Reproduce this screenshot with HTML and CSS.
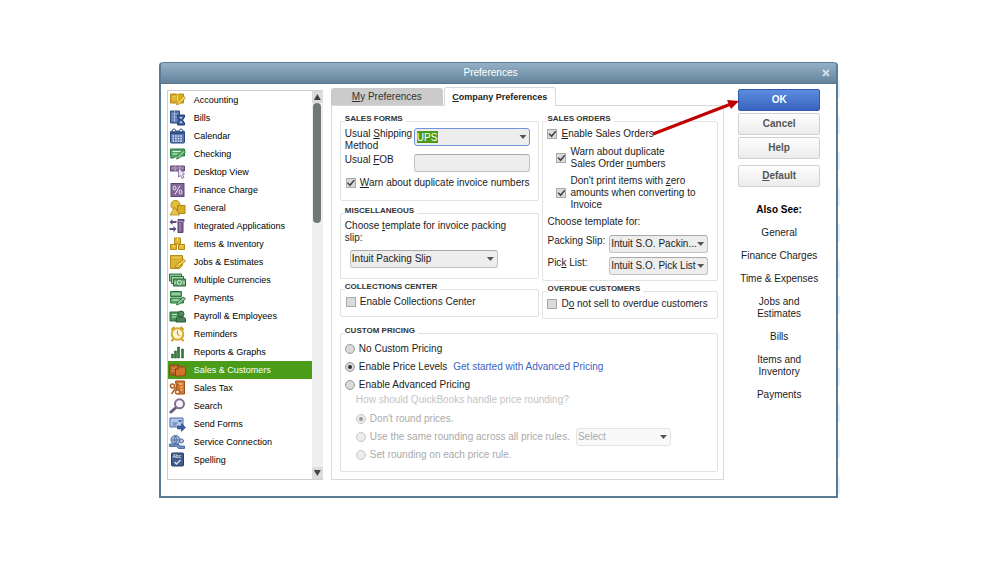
FILE: index.html
```
<!DOCTYPE html>
<html lang="en">
<head>
    <meta charset="UTF-8">
    <meta name="viewport" content="width=device-width, initial-scale=1.0">
    <title>Preferences</title>
    <link rel="stylesheet" href="styles.css">
</head>
<body>
    <div class="desktop">
    <main class="dialog">
        <header class="titlebar">
            <h1>Preferences</h1>
            <button class="close" aria-label="Close"><svg viewBox="0 0 8 8"><path d="M1 1L7 7M7 1L1 7" stroke="#d5dfe6" stroke-width="2"/></svg></button>
        </header>

        <div class="content">
            <nav class="sidebar">
                <ul class="sections">
                    <li><a href="#"><svg viewBox="0 0 16 16"><path d="M1 2h6l1 1 1-1h5v9H9l-1 1-1-1H1z" fill="#d9ad22" stroke="#b18a18"/><path d="M8 3v8M3 4.500h3M3 7h3" stroke="#f3d873"/><path d="M7 13l1-3 6-6 2 2-6 6z" fill="#f2cf55" stroke="#a98112" stroke-width=".7"/></svg>Accounting</a></li>
                    <li><a href="#"><svg viewBox="0 0 16 16"><path d="M1 1h9v12H1z" fill="#5274ae" stroke="#304f86"/><path d="M2 4h7M2 7h7M2 10h5M5 1v11" stroke="#b9cae8" stroke-width=".7"/><path d="M8 5h7v2l-2 3 2 3v2H8v-2l2-3-2-3z" fill="#3d5f9c" stroke="#243f70"/><path d="M10 7h3l-1.500 2zM10 13h3l-1.500-2z" fill="#dce7fa"/></svg>Bills</a></li>
                    <li><a href="#"><svg viewBox="0 0 16 16"><rect x="1" y="3" width="14" height="12" rx="1" fill="#5576ae" stroke="#304d80"/><path d="M1.500 3.500h13V6h-13z" fill="#344f83"/><path d="M3 8h10M3 10.500h10M3 13h10" stroke="#e1eafa" stroke-width="1.400" stroke-dasharray="1.600 1"/><circle cx="4.500" cy="2.500" r="1.500" fill="#fff" stroke="#304d80"/><circle cx="11.500" cy="2.500" r="1.500" fill="#fff" stroke="#304d80"/></svg>Calendar</a></li>
                    <li><a href="#"><svg viewBox="0 0 16 16"><path d="M1 3h14v7H7l-3 2H1l1-2H1z" fill="#56a566" stroke="#28793d"/><path d="M3 5.500h8M3 8h5" stroke="#d8f0da"/><path d="M7 13l1-3 6-6 2 2-6 6z" fill="#82c68d" stroke="#236936" stroke-width=".8"/></svg>Checking</a></li>
                    <li><a href="#"><svg viewBox="0 0 16 16"><path d="M1 2h14v5H1z" fill="#856d99" stroke="#624a78"/><path d="M5.500 2v5M10.500 2v5M2 4h2M7 4h2M12 4h2" stroke="#c9b9d6"/><path d="M9 4l6 6-2 .5 1.500 3-2 1-1.500-3L9 13z" fill="#eee6f5" stroke="#796090" stroke-width=".8"/></svg>Desktop View</a></li>
                    <li><a href="#"><svg viewBox="0 0 16 16"><rect x="1.500" y="1.500" width="13" height="13" fill="#806695" stroke="#60477a"/><ellipse cx="5" cy="6" rx="1.500" ry="2" fill="none" stroke="#efe6f5"/><ellipse cx="11" cy="10" rx="1.500" ry="2" fill="none" stroke="#efe6f5"/><path d="M10.500 3.500l-5 9" stroke="#efe6f5"/></svg>Finance Charge</a></li>
                    <li><a href="#"><svg viewBox="0 0 16 16"><circle cx="6" cy="5" r="4.500" fill="#e4bf3e" stroke="#b18a1b"/><path d="M8 5.500h7.500v8H8z" fill="#d8ac28" stroke="#ae8417"/><path d="M5 7l5 8H.500z" fill="#e8c547" stroke="#b18a1b" stroke-width=".8"/></svg>General</a></li>
                    <li><a href="#"><svg viewBox="0 0 16 16"><path d="M8.500 1.500h6v2h-1v11h-5z" fill="#7a6191" stroke="#5a4270"/><path d="M9 3.500h5M10.500 5v8" stroke="#a893ba" fill="none"/><path d="M0 4l3-3v2h4v2H3v2zM7 11l-3-3v2H0v2h4v2z" fill="#624879"/></svg>Integrated Applications</a></li>
                    <li><a href="#"><svg viewBox="0 0 16 16"><path d="M5 2h6v6H5zM1 8.500h6v5H1zM9 8.500h6v5H9z" fill="#e2b92f" stroke="#b18a19"/><path d="M8 2v3M4 9v2M12 9v2" stroke="#fae493"/></svg>Items &amp; Inventory</a></li>
                    <li><a href="#"><svg viewBox="0 0 16 16"><path d="M1 1.500h12v10l-3 3H1z" fill="#dcb332" stroke="#b48d1b"/><path d="M3 3.500h8" stroke="#edcf67"/><path d="M5 14l2-3 7-6 2 2-7 6z" fill="#f0cd52" stroke="#a67c13" stroke-width=".8"/></svg>Jobs &amp; Estimates</a></li>
                    <li><a href="#"><svg viewBox="0 0 17 16"><path d="M.500 2h12v7H.500z" fill="#86bd8a" stroke="#2c7740"/><path d="M2.500 4.500h12v7h-12z" fill="#a9d3a8" stroke="#2c7740"/><path d="M4.500 7h12v7h-12z" fill="#63a870" stroke="#226735"/><circle cx="10.500" cy="10.500" r="2" fill="none" stroke="#dceedd"/><path d="M6 9v3M15 9v3" stroke="#dceedd"/></svg>Multiple Currencies</a></li>
                    <li><a href="#"><svg viewBox="0 0 16 16"><path d="M1 1.500h11v5H1zM1 8h13v5H1z" fill="#60aa70" stroke="#277a3e"/><path d="M2 4h9M3 10h7" stroke="#d5edd6"/><path d="M7 15l1-3 6-5 2 2-6 5z" fill="#8bc690" stroke="#226735" stroke-width=".8"/></svg>Payments</a></li>
                    <li><a href="#"><svg viewBox="0 0 17 16"><path d="M1 4h12v9H1z" fill="#4c965b" stroke="#286d39"/><path d="M3 6.500h5M3 9h4" stroke="#c5e2c7"/><circle cx="12" cy="6" r="3" fill="#548c5b" stroke="#28643a"/><path d="M7 14v-2q0-3 5-3t4.500 3v2z" fill="#4c8256" stroke="#235d34"/></svg>Payroll &amp; Employees</a></li>
                    <li><a href="#"><svg viewBox="0 0 16 16"><path d="M2 4l3-3M14 4l-3-3M4 13l-2 2M12 13l2 2" stroke="#c59925" stroke-width="2"/><circle cx="8" cy="8" r="5.800" fill="#fff5d3" stroke="#d5aa2e" stroke-width="2"/><path d="M8 4.500V8l2 2" stroke="#a98322" fill="none"/></svg>Reminders</a></li>
                    <li><a href="#"><svg viewBox="0 0 16 16"><path d="M2 10h2v4H2zM5 7h2v7H5zM8 3h2v11H8zM12 5h2v9h-2z" fill="#397d42" stroke="#276332" stroke-width=".6"/></svg>Reports &amp; Graphs</a></li>
                    <li class="selected"><a href="#" aria-current="page"><svg viewBox="0 0 16 16"><path d="M0 3h9v10H0z" fill="#b76124" stroke="#8d4617"/><path d="M2 5l2 2 3-3M2 9h3" stroke="#ebaa70" fill="none"/><path d="M6 7h3V5l2-1 1 2 3-2 1 1v8l-3 1H6z" fill="#d2752a" stroke="#904716"/></svg>Sales &amp; Customers</a></li>
                    <li><a href="#"><svg viewBox="0 0 16 16"><path d="M6 1h9v13H8z" fill="#cf7832" stroke="#9a4f1b"/><path d="M9 4h4M11 7h2M11 10h2" stroke="#ffe1c4"/><g fill="#fff" stroke="#b3601f" stroke-width="1.500"><circle cx="3" cy="6" r="2"/><circle cx="8" cy="12" r="2"/><path d="M9 4l-7 10"/></g></svg>Sales Tax</a></li>
                    <li><a href="#"><svg viewBox="0 0 16 16"><path d="M6.500 9.500L1.500 14" stroke="#6b597c" stroke-width="3" stroke-linecap="round"/><circle cx="10" cy="5.800" r="4.500" fill="#f6f3fa" stroke="#806d90" stroke-width="2"/></svg>Search</a></li>
                    <li><a href="#"><svg viewBox="0 0 16 16"><path d="M.500 2h13v9H.500z" fill="#b7c9eb" stroke="#486ba8"/><path d="M3 7h5M3 9h4" stroke="#486ba8"/><path d="M9 4h3v2H9z" fill="#486ba8"/><path d="M8 10h4V7.500l4 4-4 4V13H8z" fill="#3b5f9f" stroke="#25457c" stroke-width=".6"/></svg>Send Forms</a></li>
                    <li><a href="#"><svg viewBox="0 0 16 16"><circle cx="6" cy="6" r="4.500" fill="#a4b9dc" stroke="#48689c"/><path d="M2 6h8M6 2q-3 4 0 8M6 2q3 4 0 8" fill="none" stroke="#48689c" stroke-width=".8"/><path d="M0 10h9l2 2h4v2.500h-6l-2-2H0z" fill="#718fbe" stroke="#38588d" stroke-width=".8"/><circle cx="12" cy="7" r="2" fill="#b9c9e4" stroke="#48689c"/></svg>Service Connection</a></li>
                    <li><a href="#"><svg viewBox="0 0 16 16"><rect x="2" y="1" width="12" height="13" rx="1" fill="#415c8b" stroke="#263e68"/><text x="3" y="6" class="abc">Abc</text><path d="M5 10l2 2 4-4" fill="none" stroke="#dbe5f6" stroke-width="1.300"/></svg>Spelling</a></li>
                </ul>
                <div class="scrollbar">
                    <button class="scroll-up" aria-label="Scroll up"></button>
                    <div class="thumb"></div>
                    <button class="scroll-down" aria-label="Scroll down"></button>
                </div>
            </nav>

            <section class="settings">
                <div class="tabs" role="tablist">
                    <button class="tab" role="tab"><span><u>M</u>y Preferences</span></button>
                    <button class="tab active" role="tab" aria-selected="true"><span><u>C</u>ompany Preferences</span></button>
                </div>
                <form class="panel">
                    <div class="columns">
                        <div class="column">
                            <fieldset class="sales-forms">
                                <legend>SALES FORMS</legend>
                                <div class="form-grid">
                                    <label for="shipping">Usual <u>S</u>hipping<br>Method</label>
                                    <span class="combo"><input class="field shipping" type="text" id="shipping" value="UPS"></span>
                                    <label for="fob">Usual <u>F</u>OB</label>
                                    <input class="field" type="text" id="fob">
                                </div>
                                <label class="check"><input type="checkbox" checked><span><u>W</u>arn about duplicate invoice numbers</span></label>
                            </fieldset>
                            <fieldset class="misc">
                                <legend>MISCELLANEOUS</legend>
                                <label for="packing">Choose <u>t</u>emplate for invoice packing<br>slip:</label>
                                <span class="combo"><select class="field" id="packing"><option>Intuit Packing Slip</option></select></span>
                            </fieldset>
                            <fieldset class="collections">
                                <legend>COLLECTIONS CENTER</legend>
                                <label class="check"><input type="checkbox"><span>Enable Collections Center</span></label>
                            </fieldset>
                        </div>
                        <div class="column">
                            <fieldset class="sales-orders">
                                <legend>SALES ORDERS</legend>
                                <label class="check"><input type="checkbox" checked><span><u>E</u>nable Sales Orders</span></label>
                                <label class="check sub"><input type="checkbox" checked><span>Warn about duplicate<br>Sales Order <u>n</u>umbers</span></label>
                                <label class="check sub"><input type="checkbox" checked><span>Don't print items with <u>z</u>ero<br>amounts when converting to<br>Invoice</span></label>
                                <p>Choose template for:</p>
                                <div class="template-grid">
                                    <label for="so-packing">Packin<u>g</u> Slip:</label>
                                    <span class="combo"><select class="field" id="so-packing"><option>Intuit S.O. Packin...</option></select></span>
                                    <label for="so-pick">Pic<u>k</u> List:</label>
                                    <span class="combo"><select class="field" id="so-pick"><option>Intuit S.O. Pick List</option></select></span>
                                </div>
                            </fieldset>
                            <fieldset class="overdue">
                                <legend>OVERDUE CUSTOMERS</legend>
                                <label class="check"><input type="checkbox"><span>D<u>o</u> not sell to overdue customers</span></label>
                            </fieldset>
                        </div>
                    </div>
                    <fieldset class="pricing">
                        <legend>CUSTOM PRICING</legend>
                        <div class="row"><label class="check"><input type="radio" name="pricing"><span>No Custom Pricing</span></label></div>
                        <div class="row"><label class="check"><input type="radio" name="pricing" checked><span>Enable Price Levels</span></label><a href="#" class="link">Get started with Advanced Pricing</a></div>
                        <div class="row"><label class="check"><input type="radio" name="pricing"><span>Enable Advanced Pricing</span></label></div>
                        <div class="rounding">
                            <p>How should QuickBooks handle price rounding?</p>
                            <div class="row"><label class="check"><input type="radio" name="rounding" disabled checked><span>Don't round prices.</span></label></div>
                            <div class="row"><label class="check"><input type="radio" name="rounding" disabled><span>Use the same rounding across all price rules.</span></label><span class="combo"><select class="field" aria-label="Rounding" disabled><option>Select</option></select></span></div>
                            <div class="row"><label class="check"><input type="radio" name="rounding" disabled><span>Set rounding on each price rule.</span></label></div>
                        </div>
                    </fieldset>
                </form>
            </section>

            <aside class="actions">
                <button class="btn primary">OK</button>
                <button class="btn">Cancel</button>
                <button class="btn">Help</button>
                <button class="btn default"><span><u>D</u>efault</span></button>
                <div class="also-see">
                    <h2>Also See:</h2>
                    <a href="#">General</a>
                    <a href="#">Finance Charges</a>
                    <a href="#">Time &amp; Expenses</a>
                    <a href="#">Jobs and<br>Estimates</a>
                    <a href="#">Bills</a>
                    <a href="#">Items and<br>Inventory</a>
                    <a href="#">Payments</a>
                </div>
                <!-- arrow from "Enable Sales Orders" to the OK button -->
                <svg class="arrow" viewBox="0 0 88 40"><path d="M2 36L80 6" stroke="#c00000" stroke-width="3"/><path d="M88 3L80 11L76 2z" fill="#c00000"/></svg>
            </aside>
        </div>
    </main>
    </div>
</body>
</html>
```

FILE: styles.css
```
* {
    box-sizing: border-box;
}
body {
    margin: 0;
    padding: 62px 0;
    background: #fff;
    color: #1c1c1c;
    font-family: "Liberation Sans", Arial, sans-serif;
    font-size: 10px;
    line-height: 12px;
}
h1, h2, p, ul {
    margin: 0;
    padding: 0;
}
button, input, select {
    font: inherit;
    color: inherit;
    margin: 0;
}
a {
    color: inherit;
    text-decoration: none;
}

/* strip of the window behind the dialog */
.desktop {
    width: 68.2%;
    margin: 0 auto;
    padding-right: 2px;
    background: repeating-linear-gradient(#fff 0 18px, #e9f1fb 18px 36px);
}
.dialog {
    border: 2px solid #5b7b93;
    border-top: 0;
    border-radius: 4px 4px 0 0;
    background: #fff;
}
.titlebar {
    display: flex;
    align-items: center;
    height: 22px;
    padding: 0 6px 0 20px;
    border-top: 1px solid #5b7b93;
    border-bottom: 1px solid #587289;
    border-radius: 3px 3px 0 0;
    background: linear-gradient(#94b0c6, #64839a);
}
.titlebar h1 {
    flex: 1;
    padding-right: 22px;
    text-align: center;
    font-size: 10px;
    font-weight: normal;
    color: #fff;
}
.close {
    width: 8px;
    height: 8px;
    padding: 0;
    border: 0;
    background: none;
}
.close svg {
    display: block;
}
.content {
    display: grid;
    grid-template-columns: 156px 1fr 82px;
    padding: 3px 16px 16px 6px;
}

/* sidebar */
.sidebar {
    display: flex;
    margin-top: 3px;
    border: 1px solid #cfcfcf;
    border-right: 0;
}
.sections {
    flex: 1;
    list-style: none;
    font-size: 9px;
    color: #000;
}
.sections a {
    display: flex;
    align-items: center;
    gap: 8px;
    height: 18px;
    padding-left: 1px;
    white-space: nowrap;
}
.sections svg {
    width: 17px;
    height: 16px;
    fill: none;
}
.sections .selected {
    background: #4b9c19;
    color: #fff;
}
.abc {
    font-size: 5px;
    fill: #fff;
}
.scrollbar {
    display: flex;
    flex-direction: column;
    align-items: center;
    width: 11px;
    background: #efefef;
}
.scrollbar button {
    width: 11px;
    height: 12px;
    padding: 0;
    border: 0;
    background: #dcdcdc;
}
.scrollbar button::before {
    content: "";
    display: block;
    width: 7px;
    height: 6px;
    margin: 0 auto;
    background: #444;
    clip-path: polygon(50% 0, 100% 100%, 0 100%);
}
.scrollbar .scroll-down::before {
    clip-path: polygon(0 0, 100% 0, 50% 100%);
}
.thumb {
    width: 8px;
    height: 120px;
    margin-bottom: auto;
    border-radius: 4px;
    background: #70797a;
}

/* tabs and panel */
.settings {
    display: flex;
    flex-direction: column;
    margin: 0 14px 0 8px;
}
.tabs {
    display: flex;
    gap: 1px;
}
.tab {
    height: 17px;
    margin-top: 1px;
    padding: 0;
    width: 112px;
    border: 0;
    border-radius: 3px 3px 0 0;
    background: #cbcbcb;
    color: #333;
}
.tab.active {
    z-index: 1;
    height: 19px;
    margin: 0 0 -1px;
    border: 1px solid #d8d8d8;
    border-bottom: 0;
    background: #fff;
    font-size: 9px;
    font-weight: bold;
    color: #222;
    white-space: nowrap;
}
.panel {
    flex: 1;
    padding: 8px 5px 7px 8px;
    border: 1px solid #d8d8d8;
}
.columns {
    display: grid;
    grid-template-columns: 200fr 176fr;
    gap: 3px;
}
fieldset {
    min-width: 0;
    margin: 0;
    padding: 0 8px 0 4px;
    border: 1px solid #e2e2e2;
    border-radius: 2px;
}
legend {
    padding: 0 3px 4px 0;
    font-size: 8px;
    line-height: 10px;
    font-weight: bold;
    color: #333;
}
.field {
    display: block;
    width: 100%;
    height: 18px;
    padding: 0 1px;
    border: 1px solid #c3c3c3;
    border-top-color: #a9a9a9;
    border-radius: 3px;
    outline: 0;
    background: #ededed;
    appearance: none;
}
.field.shipping {
    padding: 0 2px;
    border-color: #7293d8;
    color: #fff;
    background: linear-gradient(#4b9c19, #4b9c19) 2px center / 21px 12px no-repeat #ededed;
}
.combo {
    display: block;
    position: relative;
}
.combo::after {
    content: "";
    position: absolute;
    top: 7px;
    right: 4px;
    width: 7px;
    height: 4px;
    background: #555;
    clip-path: polygon(0 0, 100% 0, 50% 100%);
    pointer-events: none;
}
.check {
    display: flex;
    align-items: center;
    gap: 4px;
}
.check input {
    flex: none;
    display: grid;
    place-items: center;
    width: 10px;
    height: 10px;
    border: 1px solid #aaa;
    background: #dadada;
    appearance: none;
}
.check input[type="checkbox"]:checked::before {
    content: "";
    width: 8px;
    height: 7px;
    background: #444;
    clip-path: polygon(0 50%, 15% 38%, 38% 65%, 88% 0, 100% 14%, 40% 100%);
}
.check input[type="radio"] {
    border-color: #999;
    border-radius: 50%;
}
.check input[type="radio"]:checked::before {
    content: "";
    width: 4px;
    height: 4px;
    border-radius: 50%;
    background: #333;
}

.sales-forms {
    padding-bottom: 11px;
}
.form-grid {
    display: grid;
    grid-template-columns: 69px 1fr;
    row-gap: 2px;
    margin-bottom: 5px;
}
.sales-forms .check, .collections .check {
    padding-left: 1px;
}
.misc {
    margin-top: 5px;
    padding-bottom: 10px;
}
.misc label {
    display: block;
}
.misc .combo {
    width: 148px;
    margin: 6px 0 0 5px;
}
.collections {
    margin-top: 3px;
    padding-bottom: 8px;
}
.sales-orders {
    padding-bottom: 5px;
}
.sales-orders .check {
    margin-bottom: 6px;
}
.sales-orders .sub {
    margin-bottom: 5px;
    padding-left: 9px;
}
.sales-orders p {
    margin-bottom: 7px;
}
.template-grid {
    display: grid;
    grid-template-columns: 1fr 99px;
    row-gap: 4px;
    margin-right: 1px;
}
.overdue {
    margin-top: 3px;
    padding-bottom: 8px;
}

/* custom pricing */
.pricing {
    margin-top: 7px;
    padding-bottom: 7px;
}
.row {
    display: flex;
    align-items: center;
    gap: 6px;
    height: 18px;
}
.link {
    color: #3b62c4;
}
.rounding {
    padding-left: 11px;
    color: #aaa;
}
.rounding p {
    margin-bottom: 4px;
    color: #c4c4c4;
}
.rounding .check input {
    border-color: #c8c8c8;
    background: #ececec;
}
.rounding .check input:checked::before {
    background: #999;
}
.rounding .combo {
    width: 95px;
}
.rounding .field {
    border-color: #e4e4e4;
    background: #f9f9f9;
    opacity: 1;
}

/* right-hand column */
.actions {
    position: relative;
    display: flex;
    flex-direction: column;
    gap: 2px;
    padding-top: 2px;
}
.btn {
    height: 22px;
    padding: 0;
    border: 1px solid #d0d0d0;
    border-radius: 2px;
    background: linear-gradient(#fdfdfd, #ececec);
    font-weight: bold;
    color: #555;
}
.btn.primary {
    border-color: #3157a8;
    background: linear-gradient(#5c8ce0, #3a63bd);
    color: #fff;
}
.btn.default {
    margin-top: 4px;
}
.also-see {
    display: flex;
    flex-direction: column;
    gap: 11px;
    margin-top: 15px;
    text-align: center;
}
.also-see h2 {
    font-size: 10px;
    line-height: 12px;
    color: #000;
}
.arrow {
    position: absolute;
    top: 11px;
    right: 81px;
    width: 88px;
    height: 40px;
    fill: none;
    pointer-events: none;
}
```
